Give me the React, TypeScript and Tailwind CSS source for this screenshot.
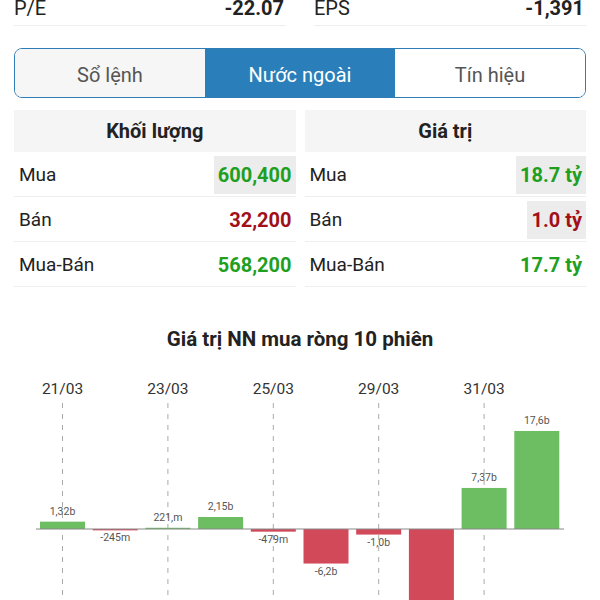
import React from 'react';

const green = 'text-[#1f9f1f]';
const red = 'text-[#a10f19]';

interface Row {
  label: string;
  value: string;
  color: string;
  highlight?: boolean;
}

const volumeRows: Row[] = [
  { label: 'Mua', value: '600,400', color: green, highlight: true },
  { label: 'Bán', value: '32,200', color: red },
  { label: 'Mua-Bán', value: '568,200', color: green },
];

const valueRows: Row[] = [
  { label: 'Mua', value: '18.7 tỷ', color: green, highlight: true },
  { label: 'Bán', value: '1.0 tỷ', color: red, highlight: true },
  { label: 'Mua-Bán', value: '17.7 tỷ', color: green },
];

const bars = [
  { v: 1.32, label: '1,32b' },
  { v: -0.245, label: '-245m' },
  { v: 0.221, label: '221,m' },
  { v: 2.15, label: '2,15b' },
  { v: -0.479, label: '-479m' },
  { v: -6.2, label: '-6,2b' },
  { v: -1.0, label: '-1,0b' },
  { v: -15.5, label: '' },
  { v: 7.37, label: '7,37b' },
  { v: 17.6, label: '17,6b' },
];

const dates = ['21/03', '23/03', '25/03', '29/03', '31/03'];

const StatTable: React.FC<{ title: string; rows: Row[] }> = ({ title, rows }) => (
  <div>
    <div className="h-[42px] bg-[#f5f5f5] flex items-center justify-center text-[20px] font-bold text-[#222]">
      {title}
    </div>
    {rows.map((row) => (
      <div key={row.label} className="h-[45px] flex items-center justify-between border-b border-[#eeeeee] pl-[5px] pt-[2px]">
        <span className="text-[19px] text-[#222]">{row.label}</span>
        <span
          className={`h-[38px] flex items-center px-[4px] text-[20px] font-bold ${row.color} ${
            row.highlight ? 'bg-[#ececec]' : ''
          }`}
        >
          {row.value}
        </span>
      </div>
    ))}
  </div>
);

const Chart: React.FC = () => {
  const base = 168;
  const scale = 5.57;
  const step = 52.7;
  const start = 40;
  const w = 45;
  return (
    <svg width="600" height="240" className="block -mx-[14px]" style={{ fontFamily: 'Roboto, sans-serif' }}>
      {dates.map((d, i) => {
        const cx = 62.5 + i * 105.4;
        return (
          <g key={d}>
            <text x={cx} y={33} textAnchor="middle" fontSize="15.5" fill="#333">
              {d}
            </text>
            <line x1={cx} y1={42} x2={cx} y2={240} stroke="#aaa" strokeWidth="1" strokeDasharray="5 6" />
          </g>
        );
      })}
      {bars.map((b, i) => {
        const x = start + i * step;
        const h = Math.max(Math.abs(b.v) * scale, 1.2);
        const y = b.v >= 0 ? base - h : base;
        const cx = x + w / 2;
        const ly = b.v >= 0 ? y - 7 : y + h + 11;
        return (
          <g key={i}>
            <rect x={x} y={y} width={w} height={h} fill={b.v >= 0 ? '#6dbd63' : '#d2495a'} />
            {b.label && (
              <text x={cx} y={ly} textAnchor="middle" fontSize="10.5" fill="#555">
                {b.label}
              </text>
            )}
          </g>
        );
      })}
      <line x1={36} y1={base} x2={564} y2={base} stroke="#888" strokeWidth="1" />
    </svg>
  );
};

export default function App() {
  return (
    <div
      className="w-[600px] h-[600px] overflow-hidden bg-white px-[14px]"
      style={{ fontFamily: 'Roboto, "Noto Sans", sans-serif' }}
    >
      <div className="-mt-[9px] grid grid-cols-2 gap-[28px]">
        <div className="flex justify-between items-center h-[35px] border-b border-[#eeeeee] text-[20px] text-[#222] pr-[2px]">
          <span>P/E</span>
          <span className="font-bold">-22.07</span>
        </div>
        <div className="flex justify-between items-center h-[35px] border-b border-[#eeeeee] text-[20px] text-[#222] pr-[2px]">
          <span>EPS</span>
          <span className="font-bold">-1,391</span>
        </div>
      </div>

      <div className="mt-[22px] h-[50px] grid grid-cols-3 rounded-[8px] border-[1.5px] border-[#2e7db6] overflow-hidden text-[20px]">
        <div className="flex items-center justify-center pt-[3px] bg-[#f6f6f6] text-[#555]">Sổ lệnh</div>
        <div className="flex items-center justify-center pt-[3px] bg-[#2a7fba] text-white">Nước ngoài</div>
        <div className="flex items-center justify-center pt-[3px] bg-white text-[#555]">Tín hiệu</div>
      </div>

      <div className="mt-[12px] grid grid-cols-2 gap-[9px]">
        <StatTable title="Khối lượng" rows={volumeRows} />
        <StatTable title="Giá trị" rows={valueRows} />
      </div>

      <div className="mt-[37px] text-center text-[20.5px] font-bold text-[#222]">Giá trị NN mua ròng 10 phiên</div>

      <div className="mt-[6px]">
        <Chart />
      </div>
    </div>
  );
}
